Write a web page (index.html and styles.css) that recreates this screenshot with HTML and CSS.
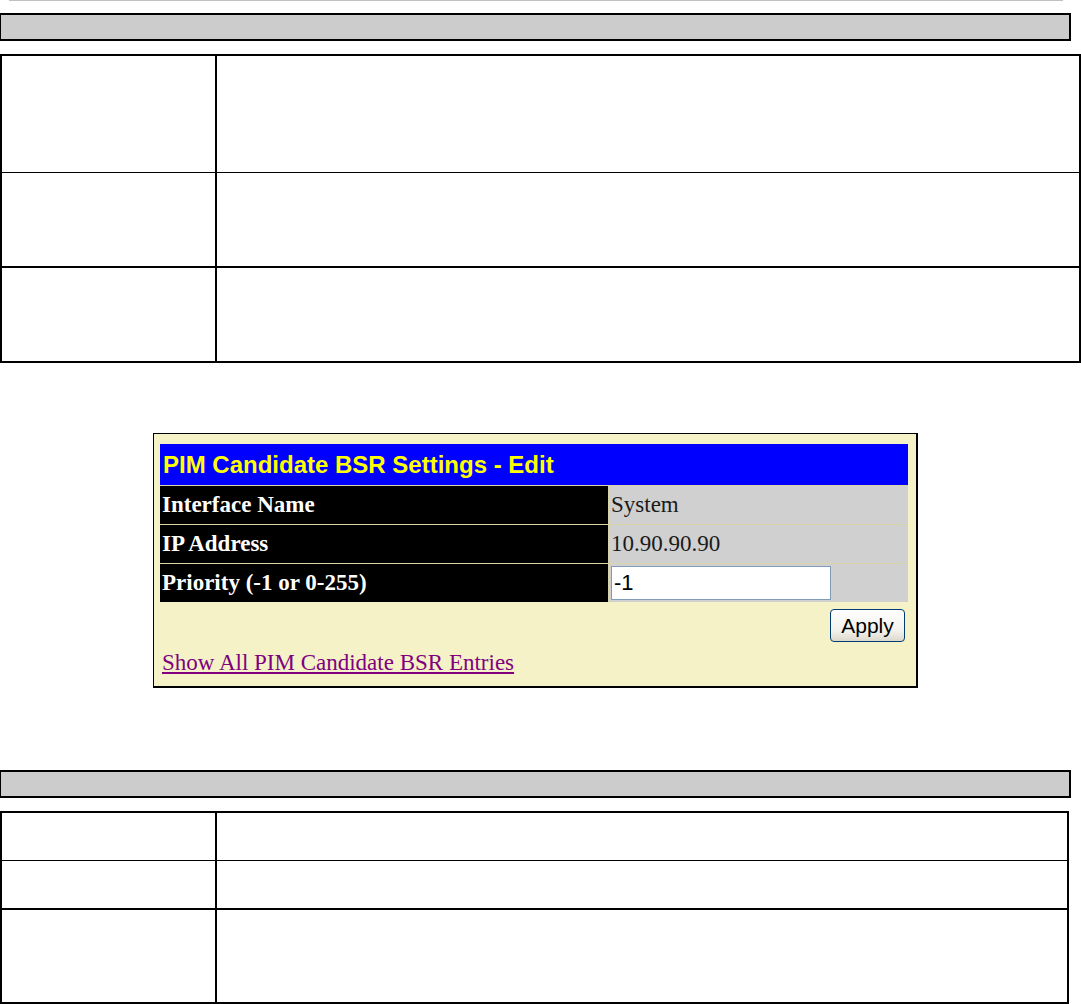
FILE: index.html
```html
<!DOCTYPE html>
<html lang="en">

<head>
    <meta charset="UTF-8">
    <meta name="viewport" content="width=device-width, initial-scale=1.0">
    <title>PIM Candidate BSR Settings</title>

    <link rel="stylesheet" href="styles.css">
</head>

<body>

    <div class="rule"></div>

    <div class="bar"></div>

    <div class="spec spec-wide">
        <div class="spec-row row-tall">
            <div class="key"></div>
            <div class="val"></div>
        </div>
        <div class="spec-row row-mid">
            <div class="key"></div>
            <div class="val"></div>
        </div>
        <div class="spec-row row-mid thick">
            <div class="key"></div>
            <div class="val"></div>
        </div>
    </div>

    <div class="panel">
        <div class="form">
            <div class="form-title">PIM Candidate BSR Settings - Edit</div>
            <div class="form-row">
                <div class="label">Interface Name</div>
                <div class="value">System</div>
            </div>
            <div class="form-row">
                <div class="label">IP Address</div>
                <div class="value">10.90.90.90</div>
            </div>
            <div class="form-row">
                <div class="label">Priority (-1 or 0-255)</div>
                <div class="value">
                    <input type="text" name="priority" value="-1">
                </div>
            </div>
        </div>

        <div class="actions">
            <button type="button" class="apply">Apply</button>
        </div>

        <a class="back-link" href="#">Show All PIM Candidate BSR Entries</a>
    </div>

    <div class="bar bar-second"></div>

    <div class="spec spec-narrow">
        <div class="spec-row row-short">
            <div class="key"></div>
            <div class="val"></div>
        </div>
        <div class="spec-row row-short">
            <div class="key"></div>
            <div class="val"></div>
        </div>
        <div class="spec-row row-long thick">
            <div class="key"></div>
            <div class="val"></div>
        </div>
    </div>

</body>

</html>
```

FILE: styles.css
```css
* {
    box-sizing: border-box;
    padding: 0;
    margin: 0;
}

body {
    background-color: #fff;
    font-family: "Liberation Serif", "Times New Roman", serif;
    color: #000;
}

.rule {
    width: 1054px;
    height: 1px;
    margin-left: 9px;
    background-color: #c0c0c0;
}

.bar {
    width: 1071px;
    height: 28px;
    margin-top: 12px;
    background-color: #cccccc;
    border: 2px solid #000;
    border-left-width: 1px;
}

.bar-second {
    margin-top: 82px;
}

/* description tables */

.spec {
    margin-top: 13px;
    border: 2px solid #000;
    background-color: #fff;
}

.spec-wide {
    width: 1081px;
}

.spec-narrow {
    width: 1069px;
}

.spec-row {
    display: grid;
    grid-template-columns: 215px 1fr;
}

.spec-row + .spec-row {
    border-top: 1px solid #000;
}

.spec-row.thick {
    border-top-width: 2px;
}

.key {
    border-right: 2px solid #000;
}

/* heights include the row's top rule */
.row-tall {
    height: 116px;
}

.row-mid {
    height: 94px;
}

.row-mid.thick {
    height: 95px;
}

.row-short {
    height: 47px;
}

.row-short + .row-short {
    height: 48px;
}

.row-long {
    height: 94px;
}

/* settings panel */

.panel {
    width: 765px;
    margin-top: 70px;
    margin-left: 153px;
    padding: 10px 8px 9px 6px;
    background-color: #f4f2c6;
    border: 1px solid #000;
    border-right-width: 2px;
    border-bottom-width: 2px;
}

.form {
    display: flex;
    flex-direction: column;
    gap: 1px;
    background-color: #d8d5ab;
}

.form-title {
    height: 41px;
    line-height: 41px;
    padding-left: 3px;
    background-color: #0000ff;
    color: #ffff00;
    font-family: "Liberation Sans", Arial, sans-serif;
    font-size: 24px;
    font-weight: bold;
}

.form-row {
    display: grid;
    grid-template-columns: 448px 1fr;
    column-gap: 1px;
    height: 38px;
}

.label {
    background-color: #000;
    color: #fff;
    font-size: 23px;
    font-weight: bold;
    line-height: 38px;
    padding-left: 2px;
}

.value {
    background-color: #d0d0d0;
    color: #1a1a1a;
    font-size: 23px;
    line-height: 38px;
    padding-left: 2px;
    display: flex;
    align-items: center;
}

.value input {
    width: 220px;
    height: 34px;
    border: 1px solid #7f9db9;
    background-color: #fff;
    padding: 0 2px;
    font-family: "Liberation Sans", Arial, sans-serif;
    font-size: 22px;
    color: #000;
    outline: none;
}

.actions {
    display: flex;
    justify-content: flex-end;
    margin-top: 7px;
    padding-right: 3px;
}

.apply {
    width: 75px;
    height: 33px;
    border: 1px solid #003c74;
    border-radius: 4px;
    background: linear-gradient(#ffffff, #f1f0ea 70%, #dcd8cc);
    font-family: "Liberation Sans", Arial, sans-serif;
    font-size: 21px;
    color: #000;
}

.back-link {
    display: inline-block;
    margin-top: 7px;
    margin-left: 2px;
    line-height: 28px;
    font-size: 23px;
    color: #800080;
}
```
